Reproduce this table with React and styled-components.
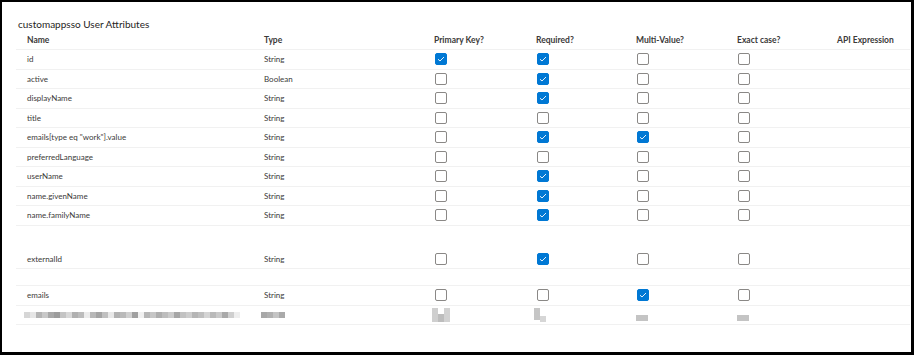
import React from 'react';
import styled, { createGlobalStyle } from 'styled-components';

const GlobalStyle = createGlobalStyle`
  html, body {
    margin: 0;
    padding: 0;
    background: #fff;
  }
  body {
    font-family: Lato, "Noto Sans", sans-serif;
    color: #323130;
  }
`;

const columns = ['Name', 'Type', 'Primary Key?', 'Required?', 'Multi-Value?', 'Exact case?', 'API Expression'];

// flags: [primary, required, multi, exact]
const rows = [
  { name: 'id', type: 'String', flags: [1, 1, 0, 0] },
  { name: 'active', type: 'Boolean', flags: [0, 1, 0, 0] },
  { name: 'displayName', type: 'String', flags: [0, 1, 0, 0] },
  { name: 'title', type: 'String', flags: [0, 0, 0, 0] },
  { name: 'emails[type eq "work"].value', type: 'String', flags: [0, 1, 1, 0] },
  { name: 'preferredLanguage', type: 'String', flags: [0, 0, 0, 0] },
  { name: 'userName', type: 'String', flags: [0, 1, 0, 0] },
  { name: 'name.givenName', type: 'String', flags: [0, 1, 0, 0] },
  { name: 'name.familyName', type: 'String', flags: [0, 1, 0, 0] },
  { name: 'externalId', type: 'String', flags: [0, 1, 0, 0], tall: true },
  { spacer: true },
  { name: 'emails', type: 'String', flags: [0, 0, 1, 0] },
];

// greys for the pixelated (redacted) last row
const nameMosaic = ['#d6d6d6', '#e6e6e6', '#b4b4b4', '#c8c8c8', '#a8a8a8', '#9c9c9c', '#c4c4c4', '#d8d8d8', '#b0b0b0', '#bcbcbc', '#ececec', '#b8b8b8', '#a4a4a4', '#c0c0c0', '#e8e8e8', '#b2b2b2', '#bababa', '#d0d0d0', '#a0a0a0', '#f0f0f0', '#b6b6b6', '#c6c6c6', '#aeaeae', '#bdbdbd', '#cbcbcb', '#a6a6a6', '#c2c2c2', '#cdcdcd', '#b5b5b5', '#bfbfbf', '#d4d4d4', '#b9b9b9', '#c9c9c9', '#a9a9a9', '#cfcfcf', '#eeeeee'];
const typeMosaic = ['#a8a8a8', '#b0b0b0', '#c4c4c4', '#aaaaaa'];

const Check = () => (
  <svg width="8" height="6" viewBox="0 0 8 6">
    <path d="M1 3.2 L3 5 L7 1" fill="none" stroke="#fff" strokeWidth="0.9" />
  </svg>
);

const App = () => {
  return (
    <Frame>
      <GlobalStyle />
      <Title>customappsso User Attributes</Title>
      <Table>
        <HeaderRow>
          {columns.map((c) => (
            <HeadCell key={c}>{c}</HeadCell>
          ))}
        </HeaderRow>
        {rows.map((r, i) => {
          if (r.spacer) return <SpacerRow key={i} />;
          return (
            <Row key={i} tall={r.tall}>
              <Cell>{r.name}</Cell>
              <Cell>{r.type}</Cell>
              {r.flags.map((f, j) => (
                <Cell key={j}>
                  <Box checked={!!f}>{f ? <Check /> : null}</Box>
                </Cell>
              ))}
              <Cell />
            </Row>
          );
        })}
        <Row>
          <Cell>
            <Mosaic>
              {nameMosaic.map((g, k) => (
                <Tile key={k} style={{ background: g }} />
              ))}
            </Mosaic>
          </Cell>
          <Cell>
            <Mosaic>
              {typeMosaic.map((g, k) => (
                <Tile key={k} style={{ background: g }} />
              ))}
            </Mosaic>
          </Cell>
          <Cell>
            <Blot>
              <Tile style={{ background: '#cfcfcf', height: 14 }} />
              <Tile style={{ background: '#bdbdbd', height: 8, alignSelf: 'flex-end' }} />
              <Tile style={{ background: '#d2d2d2', height: 14 }} />
            </Blot>
          </Cell>
          <Cell>
            <Blot>
              <Tile style={{ background: '#c6c6c6', height: 12 }} />
              <Tile style={{ background: '#d6d6d6', height: 6, alignSelf: 'flex-end' }} />
            </Blot>
          </Cell>
          <Cell>
            <Bar />
          </Cell>
          <Cell>
            <Bar />
          </Cell>
          <Cell />
        </Row>
      </Table>
    </Frame>
  );
};

const Frame = styled.div`
  box-sizing: border-box;
  width: 914px;
  height: 355px;
  border-style: solid;
  border-color: #000;
  border-width: 2px 3px 3px 2px;
  background: #fff;
  padding: 0 1px 0 14px;
`;

const Title = styled.div`
  font-size: 10px;
  line-height: 14px;
  padding: 15px 0 0 2px;
  height: 13px;
  color: #252423;
`;

const grid = `
  display: grid;
  grid-template-columns: 237px 170px 102px 100px 101px 100px 1fr;
  align-items: center;
`;

const HeaderRow = styled.div`
  ${grid}
  box-sizing: border-box;
  height: 20px;
  border-bottom: 1px solid #f1f1f1;
`;

const HeadCell = styled.div`
  padding-left: 11px;
  font-size: 8.5px;
  font-weight: 700;
  color: #3b3a39;
  white-space: nowrap;
`;

const Table = styled.div`
  display: flex;
  flex-direction: column;
`;

const Row = styled.div`
  ${grid}
  box-sizing: border-box;
  height: ${(p) => (p.tall ? '43.5px' : '19.5px')};
  padding-top: ${(p) => (p.tall ? '24px' : '0')};
  border-bottom: 1px solid #f1f1f1;
`;

const SpacerRow = styled.div`
  box-sizing: border-box;
  height: 17px;
  border-bottom: 1px solid #f1f1f1;
`;

const Cell = styled.div`
  padding-left: 11px;
  font-size: 8px;
  color: #3b3a39;
  white-space: nowrap;
  display: flex;
  align-items: center;
`;

const Box = styled.span`
  box-sizing: border-box;
  width: 12px;
  height: 12px;
  border-radius: 2px;
  border: 1px solid ${(p) => (p.checked ? '#0078d4' : '#8a8886')};
  background: ${(p) => (p.checked ? '#0078d4' : '#fff')};
  display: inline-flex;
  align-items: center;
  justify-content: center;
  margin-left: 1px;
`;

const Mosaic = styled.div`
  display: flex;
  height: 6px;
  margin-left: -3px;
`;

const Blot = styled.div`
  display: flex;
  height: 14px;
  margin-left: -2px;
`;

const Tile = styled.span`
  display: block;
  width: 6px;
  height: 100%;
`;

const Bar = styled.span`
  display: block;
  width: 12px;
  height: 6px;
  margin-top: 6px;
  background: #c4c4c4;
`;

export default App;
